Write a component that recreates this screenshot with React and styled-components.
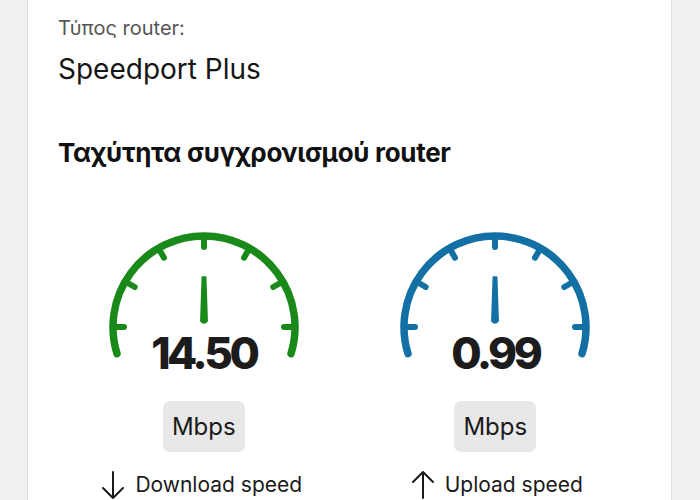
import styled, { createGlobalStyle } from "styled-components";

const GlobalStyle = createGlobalStyle`
  html, body {
    margin: 0;
    padding: 0;
    background: #f1f1f1;
    font-family: Inter, "Noto Sans", "Liberation Sans", sans-serif;
    color: #1a1a1a;
  }
`;

const Page = styled.div`
  padding: 0 28px 0 27px;
  height: 500px;
  overflow: hidden;
`;

const Card = styled.div`
  background: #fff;
  border-left: 1px solid #dedede;
  border-right: 1px solid #dedede;
  padding: 16px 30px 40px 30px;
  min-height: 600px;
`;

const Label = styled.div`
  font-size: 20px;
  line-height: 24px;
  color: #555;
`;

const Value = styled.div`
  margin-top: 12px;
  font-size: 28px;
  line-height: 34px;
  color: #151515;
`;

const Heading = styled.h2`
  margin: 51px 0 0 0;
  font-size: 26px;
  line-height: 31px;
  font-weight: 700;
  letter-spacing: -0.3px;
  color: #111;
`;

const Gauges = styled.div`
  margin-top: 59px;
  display: grid;
  grid-template-columns: 1fr 1fr;
`;

const Column = styled.div`
  display: flex;
  flex-direction: column;
  align-items: center;
`;

const Speed = styled.div`
  margin-top: -31px;
  font-size: 44px;
  line-height: 44px;
  font-weight: 800;
  letter-spacing: -3.5px;
  color: #1c1c1c;
`;

const Unit = styled.div`
  margin-top: 26px;
  background: #e8e8e8;
  border-radius: 7px;
  padding: 12px 9px;
  font-size: 24px;
  line-height: 27px;
  color: #1a1a1a;
`;

const Direction = styled.div`
  margin-top: 18px;
  display: flex;
  align-items: center;
  gap: 10px;
  font-size: 21px;
  line-height: 30px;
  color: #1a1a1a;
  margin-left: ${(p) => p.$shift || 0}px;
`;

const R = 91;
const CX = 100;
const CY = 100;

const pt = (deg, r) => {
  const a = (deg * Math.PI) / 180;
  return [CX + r * Math.sin(a), CY - r * Math.cos(a)];
};

const Gauge = ({ color }) => {
  const [sx, sy] = pt(-107, R);
  const [ex, ey] = pt(107, R);
  const ticks = [-90, -60, -30, 0, 30, 60, 90];
  return (
    <svg width="200" height="135" viewBox="0 0 200 135">
      <path
        d={`M ${sx} ${sy} A ${R} ${R} 0 1 1 ${ex} ${ey}`}
        fill="none"
        stroke={color}
        strokeWidth="7.5"
        strokeLinecap="round"
      />
      {ticks.map((t) => {
        const [x1, y1] = pt(t, R);
        const [x2, y2] = pt(t, R - 11);
        return (
          <line key={t} x1={x1} y1={y1} x2={x2} y2={y2} stroke={color} strokeWidth="6" strokeLinecap="round" />
        );
      })}
      <path
        d="M 98.3 50 L 101.7 50 L 103.2 94 Q 100 98 96.8 94 Z"
        fill={color}
        stroke={color}
        strokeWidth="1.5"
        strokeLinejoin="round"
      />
    </svg>
  );
};

const Arrow = ({ up }) => (
  <svg width="24" height="30" viewBox="0 0 24 30" style={{ transform: up ? "rotate(180deg)" : "none" }}>
    <path d="M12 2 L12 28 M2 18 L12 28 L22 18" fill="none" stroke="#1a1a1a" strokeWidth="2" strokeLinecap="round" strokeLinejoin="round" />
  </svg>
);

export default function App() {
  return (
    <>
      <GlobalStyle />
      <Page>
        <Card>
          <Label>Τύπος router:</Label>
          <Value>Speedport Plus</Value>
          <Heading>Ταχύτητα συγχρονισμού router</Heading>
          <Gauges>
            <Column>
              <Gauge color="#198a1a" />
              <Speed>14.50</Speed>
              <Unit>Mbps</Unit>
              <Direction $shift={-4}>
                <Arrow />
                Download speed
              </Direction>
            </Column>
            <Column>
              <Gauge color="#1270a4" />
              <Speed>0.99</Speed>
              <Unit>Mbps</Unit>
              <Direction $shift={3}>
                <Arrow up />
                Upload speed
              </Direction>
            </Column>
          </Gauges>
        </Card>
      </Page>
    </>
  );
}
